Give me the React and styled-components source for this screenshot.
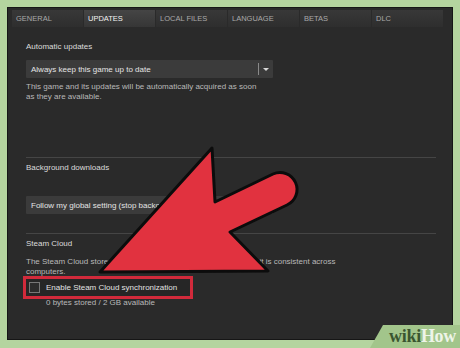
import React from 'react';
import styled, { createGlobalStyle } from 'styled-components';

const GlobalStyle = createGlobalStyle`
  html, body {
    margin: 0;
    padding: 0;
    background: #b4d49f;
  }
  body {
    font-family: "Liberation Sans", Arial, sans-serif;
  }
`;

const Page = styled.div`
  position: relative;
  width: 460px;
  height: 348px;
  padding: 7px 7px 8px 7px;
  box-sizing: border-box;
  overflow: hidden;
`;

const Panel = styled.div`
  height: 100%;
  background: #2a2a2a;
  border: 1px solid #161616;
  box-sizing: border-box;
  display: flex;
  flex-direction: column;
`;

const TabBar = styled.div`
  display: flex;
  gap: 1px;
  padding: 2px 0 0 4px;
`;

const Tab = styled.div`
  width: 71px;
  height: 17px;
  box-sizing: border-box;
  padding-left: 4px;
  display: flex;
  align-items: center;
  font-size: 7.5px;
  text-transform: uppercase;
  color: ${p => (p.$active ? '#f2f2f2' : '#a9a9a9')};
  background: ${p =>
    p.$active
      ? 'linear-gradient(#454545, #363636)'
      : 'linear-gradient(#383838, #2e2e2e)'};
`;

const Content = styled.div`
  padding: 15px 17px 0 18px;
  display: flex;
  flex-direction: column;
  align-items: flex-start;
`;

const Label = styled.div`
  margin-top: ${p => p.$mt || 0}px;
  font-size: 8px;
  line-height: 10px;
  color: #dcdcdc;
`;

const Note = styled.div`
  margin-top: ${p => p.$mt || 0}px;
  margin-left: ${p => p.$ml || 0}px;
  font-size: 8px;
  line-height: 10px;
  color: #b9b9b9;
`;

const Select = styled.div`
  margin-top: ${p => p.$mt || 0}px;
  width: 247px;
  height: 18px;
  background: #3b3b3b;
  border-radius: 1px;
  display: flex;
  align-items: center;
  box-sizing: border-box;
  padding-left: 5px;
`;

const SelectText = styled.span`
  flex: 1;
  font-size: 8px;
  color: #e4e4e4;
  white-space: nowrap;
`;

const Caret = styled.span`
  width: 14px;
  height: 12px;
  border-left: 1px solid #8a8a8a;
  display: flex;
  align-items: center;
  justify-content: center;
  &::after {
    content: '';
    border-left: 3px solid transparent;
    border-right: 3px solid transparent;
    border-top: 3px solid #d8d8d8;
  }
`;

const Divider = styled.div`
  margin-top: ${p => p.$mt || 0}px;
  width: 410px;
  height: 1px;
  background: #454545;
`;

const CheckRow = styled.label`
  margin-top: 2px;
  width: 164px;
  height: 17px;
  box-sizing: border-box;
  padding-left: 3px;
  display: flex;
  align-items: center;
  gap: 6px;
  outline: 3px solid #d12a3b;
  background: #262626;
  font-size: 8px;
  color: #e2e2e2;
`;

const Box = styled.span`
  width: 11px;
  height: 11px;
  box-sizing: border-box;
  border: 1px solid #777;
  background: #2c2c2c;
`;

const Arrow = styled.svg`
  position: absolute;
  left: 0;
  top: 0;
  pointer-events: none;
`;

const Badge = styled.div`
  position: absolute;
  left: 370px;
  top: 325px;
  width: 90px;
  height: 23px;
  background: #a2c58b;
  clip-path: polygon(13px 0, 100% 0, 100% 100%, 0 100%);
  display: flex;
  align-items: center;
  justify-content: flex-end;
  padding-right: 4px;
  box-sizing: border-box;
  font-family: "Liberation Serif", "DejaVu Serif", serif;
  font-weight: bold;
  font-size: 18px;
  letter-spacing: -0.3px;
`;

const Wiki = styled.span`
  color: ${p => (p.$light ? '#eef4e8' : '#3a5530')};
`;

const tabs = ['General', 'Updates', 'Local files', 'Language', 'Betas', 'DLC'];

export default function App() {
  return (
    <>
      <GlobalStyle />
      <Page>
        <Panel>
          <TabBar>
            {tabs.map(t => (
              <Tab key={t} $active={t === 'Updates'}>{t}</Tab>
            ))}
          </TabBar>
          <Content>
            <Label>Automatic updates</Label>
            <Select $mt={8}>
              <SelectText>Always keep this game up to date</SelectText>
              <Caret />
            </Select>
            <Note $mt={4}>
              This game and its updates will be automatically acquired as soon<br />
              as they are available.
            </Note>
            <Divider $mt={55} />
            <Label $mt={5}>Background downloads</Label>
            <Select $mt={23}>
              <SelectText>Follow my global setting (stop background downloads)</SelectText>
              <Caret />
            </Select>
            <Divider $mt={19} />
            <Label $mt={5}>Steam Cloud</Label>
            <Note $mt={8}>
              The Steam Cloud stores your game settings and progress so that it is consistent across<br />
              computers.
            </Note>
            <CheckRow>
              <Box />
              Enable Steam Cloud synchronization
            </CheckRow>
            <Note $mt={2} $ml={20}>0 bytes stored / 2 GB available</Note>
          </Content>
        </Panel>
        <Arrow width="460" height="348" viewBox="0 0 460 348">
          <path
            d="M212,148 L215,202 L273,174 A16.7,16.7 0 0 1 287,205 L230,232 L268,271 L100,272 Z"
            fill="#e1323f"
            stroke="#0c0c0c"
            strokeWidth="3"
            strokeLinejoin="round"
          />
        </Arrow>
        <Badge>
          <Wiki>wiki</Wiki>
          <Wiki $light>How</Wiki>
        </Badge>
      </Page>
    </>
  );
}
